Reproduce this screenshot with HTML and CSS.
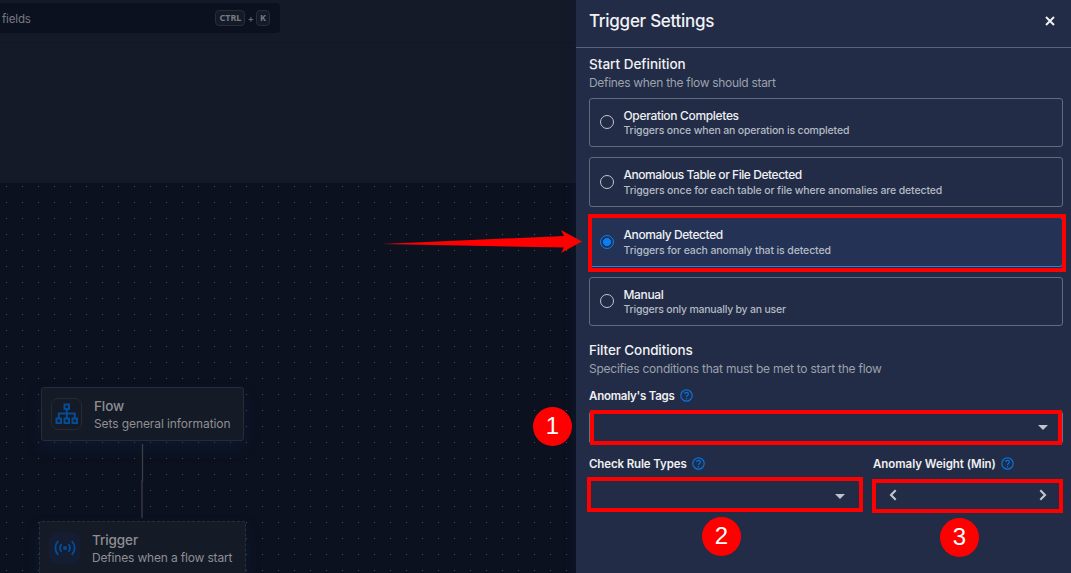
FILE: index.html
```html
<!DOCTYPE html>
<html lang="en">
<head>
<meta charset="utf-8">
<title>Trigger Settings</title>
<link rel="stylesheet" href="styles.css">
</head>
<body>
<div class="app">
  <main class="workspace">
    <header class="topbar">
      <div class="search">
        <span class="search-text">fields</span>
        <span class="shortcut"><kbd>CTRL</kbd><span class="plus">+</span><kbd class="key-k">K</kbd></span>
      </div>
    </header>
    <div class="subbar"></div>
    <section class="canvas">
      <div class="node node-flow">
        <span class="node-icon">
          <svg width="24" height="22" viewBox="0 0 24 22" fill="none" stroke="#054c95" stroke-width="2">
            <rect x="9.500" y="1.500" width="4.500" height="4.500"/>
            <rect x="1.500" y="15.500" width="4.500" height="4.500"/>
            <rect x="9.500" y="15.500" width="4.500" height="4.500"/>
            <rect x="17.500" y="15.500" width="4.500" height="4.500"/>
            <path d="M11.750 6v9M3.750 15v-4.500h16V15"/>
          </svg>
        </span>
        <span class="node-body"><b class="flow-title">Flow</b><span class="flow-sub">Sets general information</span></span>
      </div>
      <svg class="edge" width="4" height="74" viewBox="0 0 4 74" fill="none" stroke="#3c3d45" stroke-width="1.3"><path d="M2.5 0V37L2 37V74"/></svg>
      <div class="node node-trigger">
        <span class="node-icon filled">
          <svg width="22" height="16" viewBox="0 0 22 16" fill="none" stroke="#054c95" stroke-width="1.9">
            <circle cx="11" cy="8" r="2.1" fill="#054c95" stroke="none"/>
            <path d="M7.600 4.200a5.400 5.400 0 0 0 0 7.600M14.400 4.200a5.400 5.400 0 0 1 0 7.600M4.200 1.200a9.700 9.700 0 0 0 0 13.600M17.800 1.200a9.700 9.700 0 0 1 0 13.600"/>
          </svg>
        </span>
        <span class="node-body"><b class="trigger-title">Trigger</b><span class="trigger-sub">Defines when a flow start</span></span>
      </div>
    </section>
  </main>

  <aside class="drawer">
    <header class="drawer-head">
      <h1>Trigger Settings</h1>
      <svg class="close" width="10" height="10" viewBox="0 0 10 10" stroke="#f1f2f5" stroke-width="1.9"><path d="M1 1l8 8M9 1l-8 8"/></svg>
    </header>
    <div class="drawer-body">
      <h2 class="start-title">Start Definition</h2>
      <p class="hint start-hint">Defines when the flow should start</p>
      <div class="options">
        <label class="option"><i class="radio"></i><span class="option-text"><b class="o1">Operation Completes</b><small class="s1">Triggers once when an operation is completed</small></span></label>
        <label class="option tall"><i class="radio"></i><span class="option-text"><b class="o2">Anomalous Table or File Detected</b><small class="s2">Triggers once for each table or file where anomalies are detected</small></span></label>
        <label class="option tall selected"><i class="radio on"></i><span class="option-text"><b class="o3">Anomaly Detected</b><small class="s3">Triggers for each anomaly that is detected</small></span></label>
        <label class="option"><i class="radio"></i><span class="option-text"><b class="o4">Manual</b><small class="s4">Triggers only manually by an user</small></span></label>
      </div>
      <h2 class="filter-title">Filter Conditions</h2>
      <p class="hint filter-hint">Specifies conditions that must be met to start the flow</p>
      <div class="field tags">
        <div class="label"><span class="l1">Anomaly's Tags</span><svg class="help" width="13" height="13" viewBox="0 0 13 13" fill="none" stroke="#0872dc" stroke-width="1.2"><circle cx="6.5" cy="6.5" r="5.7"/><path d="M4.700 5.100c0-2.500 3.700-2.300 3.700-.1C8.400 6.400 6.500 6.500 6.500 8M6.500 9v1.300"/></svg></div>
        <div class="input"><i class="caret"></i></div>
      </div>
      <div class="field-row">
        <div class="field rules">
          <div class="label"><span class="l2">Check Rule Types</span><svg class="help" width="13" height="13" viewBox="0 0 13 13" fill="none" stroke="#0872dc" stroke-width="1.2"><circle cx="6.5" cy="6.5" r="5.7"/><path d="M4.700 5.100c0-2.500 3.700-2.300 3.700-.1C8.400 6.400 6.500 6.500 6.500 8M6.500 9v1.300"/></svg></div>
          <div class="input"><i class="caret"></i></div>
        </div>
        <div class="field weight">
          <div class="label"><span class="l3">Anomaly Weight (Min)</span><svg class="help" width="13" height="13" viewBox="0 0 13 13" fill="none" stroke="#0872dc" stroke-width="1.2"><circle cx="6.5" cy="6.5" r="5.7"/><path d="M4.700 5.100c0-2.500 3.700-2.300 3.700-.1C8.400 6.400 6.500 6.500 6.500 8M6.500 9v1.300"/></svg></div>
          <div class="input stepper">
            <svg width="8" height="12" viewBox="0 0 8 12" fill="none" stroke="#c3c6cd" stroke-width="2.1"><path d="M6.700 1.300L2 6l4.700 4.700"/></svg>
            <svg width="8" height="12" viewBox="0 0 8 12" fill="none" stroke="#c3c6cd" stroke-width="2.1"><path d="M1.300 1.300L6 6l-4.700 4.700"/></svg>
          </div>
        </div>
      </div>
    </div>
  </aside>

  <div class="frame frame-option"></div>
  <div class="frame frame-tags"></div>
  <div class="frame frame-rules"></div>
  <div class="frame frame-weight"></div>
  <span class="badge badge-1">1</span>
  <span class="badge badge-2">2</span>
  <span class="badge badge-3">3</span>
  <svg class="arrow" width="202" height="28" viewBox="0 0 202 28" fill="#ff0000"><path d="M0 14L182 6 179 0 200 11.500 179 23 182 17.500Z"/></svg>
</div>
</body>
</html>
```
FILE: styles.css
```css
* { box-sizing: border-box; }
body { margin: 0; font-family: Inter, "Liberation Sans", sans-serif; }
h1, h2, p { margin: 0; white-space: nowrap; }
b, small, kbd, .l1, .l2, .l3, .flow-sub, .trigger-sub { white-space: nowrap; }

.app { position: relative; display: grid; grid-template-columns: 576px 495px; width: 1071px; height: 573px; overflow: hidden; background: #0c1120; }

.workspace { display: flex; flex-direction: column; min-width: 0; }
.topbar { height: 43px; padding-top: 3px; background: #151a29; border-bottom: 1px solid #121726; }
.search { display: flex; align-items: center; justify-content: space-between; width: 280px; height: 30px; padding: 0 10px 0 2px; background: #0c1120; border-radius: 0 4px 4px 0; }
.search-text { padding-top: 2px; font-size: 11.500px; letter-spacing: -0.15px; color: #777a81; }
.shortcut { display: flex; align-items: center; gap: 2px; color: #777a81; }
kbd { height: 16px; padding: 0 3px; border: 1px solid #292d3a; border-radius: 4px; background: #151a29; color: #777a80; font: bold 9px/14px "Noto Sans", sans-serif; }
.plus { font-size: 10px; line-height: 14px; }
.subbar { height: 140px; background: #151a29; }

.canvas { position: relative; flex: 1; background: conic-gradient(from 270deg at 1px 1px, #50525b 90deg, transparent 0) 6px 3px / 16px 16px #0c1120; }
.node { position: absolute; display: flex; background: #151a27; box-shadow: 0 7px 14px rgba(9, 35, 62, .42); }
.node-flow { left: 41px; top: 204px; width: 203px; height: 54px; padding: 10px 9px; gap: 12px; border: 1px solid #262b37; border-radius: 3px; }
.node-trigger { left: 39px; top: 338px; width: 207px; height: 56px; padding: 10px 9px; gap: 12px; border: 1px dashed #292e39; border-radius: 3px; }
.node-icon { display: flex; align-items: center; justify-content: center; flex: none; width: 31px; height: 32px; border: 1px solid #242a36; border-radius: 7px; }
.node-icon.filled { background: #141d31; border-color: #141d31; }
.node-body { display: flex; flex-direction: column; color: #8e8f93; }
.node-body b { font-size: 13.500px; font-weight: 500; line-height: 17px; letter-spacing: -0.1px; }
.node-body span { font-size: 12px; line-height: 18px; }
.node-body .flow-sub { letter-spacing: -0.09px; }
.node-body .trigger-sub { letter-spacing: -0.17px; }
.edge { position: absolute; left: 140px; top: 261px; }

.drawer { position: relative; background: #222c46; box-shadow: 0 0 10px rgba(14, 28, 48, .9); }
.drawer-head { display: flex; align-items: center; justify-content: space-between; height: 48px; padding: 0 16px 6px 13px; border-bottom: 1px solid #5b6376; }
h1 { font-size: 17px; font-weight: 500; letter-spacing: -0.28px; color: #f1f2f5; }
.drawer-body { padding: 7px 8px 0 13px; }
h2 { font-size: 13.500px; line-height: 18px; font-weight: 500; color: #f1f2f5; }
.filter-title { margin-top: 15px; letter-spacing: -0.12px; }
.hint { font-size: 12px; line-height: 19px; color: #9ca1ad; }
.start-hint { letter-spacing: -0.31px; }
.filter-hint { letter-spacing: -0.24px; }
.options { display: flex; flex-direction: column; gap: 10px; padding-top: 6px; }
.option { display: flex; align-items: center; gap: 10px; height: 49px; padding: 1px 10px 0; border: 1px solid #626a7c; border-radius: 3px; }
.option.tall { height: 50px; }
.option.selected { background: #243355; border-color: #337fe0; }
.radio { width: 14px; height: 14px; margin-bottom: 2px; flex: none; border: 1.500px solid #c1c5cd; border-radius: 50%; }
.radio.on { border-color: #087ff5; background: radial-gradient(circle, #087ff5 3.700px, transparent 4.300px); }
.option-text { display: flex; flex-direction: column; margin-left: -0.500px; }
.option-text b { font-size: 12px; font-weight: 500; line-height: 15px; color: #eff0f3; }
.tall b { margin-top: -1px; margin-bottom: 1px; }
.option-text small { font-size: 10.500px; font-weight: 500; line-height: 15px; color: #b5bac5; }
.o1 { letter-spacing: -0.33px; }
.o2 { letter-spacing: -0.45px; }
.o3 { letter-spacing: -0.4px; }
.o4 { letter-spacing: -0.35px; }
.s1 { letter-spacing: -0.16px; }
.s2 { letter-spacing: -0.13px; }
.s3 { letter-spacing: -0.12px; }
.s4 { letter-spacing: -0.22px; }
.label { display: flex; align-items: center; gap: 5px; height: 16px; font-size: 11.500px; font-weight: 600; color: #eff0f3; }
.help { margin-bottom: 1px; }
.l1 { letter-spacing: -0.24px; }
.l2 { letter-spacing: -0.13px; }
.l3 { letter-spacing: -0.04px; }
.tags { margin-top: 10px; }
.input { display: flex; align-items: center; justify-content: flex-end; height: 33px; margin-top: 7px; padding: 0 14px; border: 1px solid #6a7182; border-radius: 3px; }
.caret { border: 5px solid transparent; border-top-color: #c0c3cb; border-bottom-width: 0; }
.field-row { display: grid; grid-template-columns: 271px 190px; gap: 13px; margin-top: 12px; }
.field-row .input { height: 32px; }
.rules .caret { margin-top: 2px; }
.input.stepper { justify-content: space-between; padding: 0 15px; }

.frame { position: absolute; border: 4px solid #ff0000; }
.frame-option { left: 588px; top: 214px; width: 478px; height: 58px; }
.frame-tags { left: 590px; top: 410px; width: 472px; height: 35px; }
.frame-rules { left: 587px; top: 477px; width: 276px; height: 35px; }
.frame-weight { left: 872px; top: 479px; width: 191px; height: 34px; }
.badge { position: absolute; width: 39px; height: 39px; border-radius: 50%; background: #ff0000; color: #fff; font: 24px/38px "Liberation Sans", sans-serif; text-align: center; }
.badge-1 { left: 533px; top: 407px; }
.badge-2 { left: 702px; top: 517px; }
.badge-3 { left: 940px; top: 518px; }
.arrow { position: absolute; left: 382px; top: 230px; }
```
